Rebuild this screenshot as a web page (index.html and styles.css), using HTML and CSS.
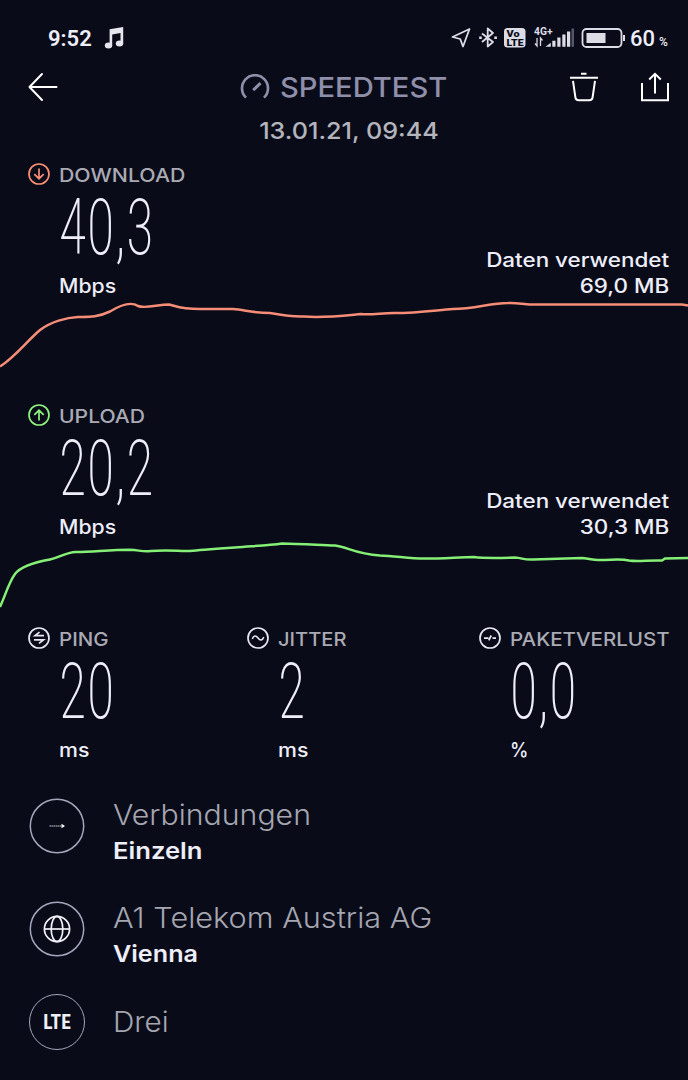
FILE: index.html
```
<!DOCTYPE html>
<html lang="de">
<head>
    <meta charset="UTF-8">
    <meta name="viewport" content="width=device-width, initial-scale=1.0">
    <title>Speedtest</title>
    <link rel="stylesheet" href="styles.css">
</head>
<body>
    <div class="status-bar">
        <span class="clock">9:52</span>
        <svg class="note" width="20" height="24" viewBox="0 0 20 24" fill="#e6e6ee">
            <path d="M5.600 3.200 19.200 1v16.500h-2.700V7L8.200 8.400v11.100H5.600z"/>
            <ellipse cx="4.500" cy="19.600" rx="3.700" ry="3"/>
            <ellipse cx="15.500" cy="17.400" rx="3.700" ry="3"/>
        </svg>
        <svg class="status-icons" width="174" height="26" viewBox="0 0 174 26" fill="none" stroke="#dcdce4" stroke-width="1.800">
            <path d="M18.500 4 1.500 12l7.700 2 2.800 7.500z" stroke-linejoin="round"/>
            <path d="M31 8.500 42 17l-5.300 4.500V3.500L42 8 31 17" stroke-linejoin="round"/>
            <path d="M28.200 12.800h2.600M43.300 12.800h2.600" stroke-width="2.600"/>
            <rect x="53" y="3" width="21.500" height="19.500" rx="3.500" fill="#dcdce4" stroke="none"/>
            <text class="volte" x="55.500" y="11.500" textLength="13" lengthAdjust="spacingAndGlyphs">Vo</text>
            <text class="volte" x="55.500" y="20.500" textLength="17" lengthAdjust="spacingAndGlyphs">LTE</text>
            <text class="net" x="83" y="9.500" textLength="18.500" lengthAdjust="spacingAndGlyphs">4G+</text>
            <path d="M86 13v8l-2-2.500M89.500 21v-8l2 2.500" stroke-width="1.300"/>
            <path d="M94.500 21.800h5.300v-4.100zM101.300 15.700h3.200v6.100h-3.200zM106.300 12.500h3.200v9.300h-3.200zM111.300 9.500h3.200v12.300h-3.200zM116 6.500h3.200v15.300H116z" fill="#dcdce4" stroke="none"/>
            <path d="M120.500 3.500h2.500v18.300h-2.500z" fill="#55566a" stroke="none"/>
            <rect x="131.500" y="4" width="39" height="18" rx="4"/>
            <path d="M135.500 8h19v10h-19z" fill="#dcdce4" stroke="none"/>
            <path d="M173 10v6" stroke-width="2"/>
        </svg>
        <span class="battery">60</span><span class="battery-unit">%</span>
    </div>

    <header class="top-bar">
        <svg class="back" width="32" height="32" viewBox="0 0 32 32" fill="none" stroke="#fff" stroke-width="2" stroke-linecap="round" stroke-linejoin="round">
            <path d="M15 3 2.500 16 15 29M2.500 16h27"/>
        </svg>
        <div class="brand">
            <svg width="30" height="26" viewBox="0 0 30 26" fill="none" stroke="#8f8faa" stroke-width="2.700">
                <path d="M6 23.600A13 13 0 1 1 24 23.600"/>
                <path d="m13.200 16.200 7.300-7" stroke-width="3"/>
            </svg>
            <span class="brand-name">SPEEDTEST</span>
        </div>
        <svg class="trash" width="30" height="32" viewBox="0 0 30 32" fill="none" stroke="#fff" stroke-width="2">
            <path d="M1 6.800h28M12 2.800h5.500M4 9.800l2.400 16.500q.4 2.900 3.200 2.900h10.800q2.800 0 3.200-2.900L26 9.800"/>
        </svg>
        <svg class="share" width="30" height="32" viewBox="0 0 30 32" fill="none" stroke="#fff" stroke-width="2">
            <path d="M2 12v17.200h26V12M15 22.500V3M9.200 8.500 15 2.800l5.800 5.700"/>
        </svg>
    </header>
    <div class="date"><span>13.01.21, 09:44</span></div>

    <section class="result">
        <div class="label">
            <svg width="22" height="22" viewBox="0 0 22 22" fill="none" stroke="#f98f75" stroke-width="1.700">
                <circle cx="11" cy="11" r="10"/>
                <path d="M11 5.500v10M6.300 11.200l4.700 4.500 4.700-4.500"/>
            </svg>
            <span class="name download">DOWNLOAD</span>
        </div>
        <div class="value"><span>40,3</span></div>
        <div class="details">
            <span class="unit">Mbps</span>
            <div class="used">Daten verwendet<br>69,0 MB</div>
        </div>
        <svg class="chart" width="688" height="72" viewBox="0 298 688 72" fill="none" stroke="#f58d77" stroke-width="2.500">
            <path d="M0 366.500C15 357 27 341 40 330C51 322 66 317.500 78 317C90 317 97 317.500 110 311.500C119 306 130 300.500 138 306C145 309 158 304.500 169 304.500C176 306 180 309 200 309L233 309C245 310 254 313 270 313C281 315 290 317 304 316.500C324 318 340 316 361 314C372 315 381 313 394 313C420 313 437 310 453 309C475 309 490 303 508 303C520 302.500 524 305 540 304.500L682 304.500L688 305.500"/>
        </svg>
    </section>

    <section class="result">
        <div class="label">
            <svg width="22" height="22" viewBox="0 0 22 22" fill="none" stroke="#8ff27e" stroke-width="1.700">
                <circle cx="11" cy="11" r="10"/>
                <path d="M11 16.500v-10M6.300 10.800 11 6.300l4.700 4.500"/>
            </svg>
            <span class="name upload">UPLOAD</span>
        </div>
        <div class="value"><span>20,2</span></div>
        <div class="details">
            <span class="unit">Mbps</span>
            <div class="used">Daten verwendet<br>30,3 MB</div>
        </div>
        <svg class="chart" width="688" height="72" viewBox="0 539 688 72" fill="none" stroke="#85ef76" stroke-width="2.500">
            <path d="M0 607C5 596 9 582 15 574C21 566 36 562 50 559.500C60 557.500 65 552.500 76 552C95 551.500 111 550 130 549.800C139 550 142 552 151 551C165 549.500 178 551 190 551C204 550 211 549 235 547.500C253 546 268 545.500 282 543.500C302 544 320 545 335 545.500C348 547 355 554 380 555.500C395 556 410 558.500 424 558.500C445 558.500 460 557 474 557C485 558.500 500 558 515 557.500C523 558 523 560 533 559.500L582 558C592 559 593 560.500 600 560C613 560 620 558.500 629 560.500C638 562 648 560 662 560.500L665 558.500L688 558"/>
        </svg>
    </section>

    <section class="metrics">
        <div class="metric">
            <div class="label">
                <svg width="22" height="22" viewBox="0 0 22 22" fill="none" stroke="#e8e8f2" stroke-width="1.700">
                    <circle cx="11" cy="11" r="10"/>
                    <path d="M16 8.700H7l4.500-3.500M6 12.800h9.500l-4.500 3.500"/>
                </svg>
                <span class="name ping">PING</span>
            </div>
            <div class="value"><span>20</span></div>
            <div class="unit ms">ms</div>
        </div>
        <div class="metric">
            <div class="label">
                <svg width="22" height="22" viewBox="0 0 22 22" fill="none" stroke="#e8e8f2" stroke-width="1.700">
                    <circle cx="11" cy="11" r="10"/>
                    <path d="M5.300 12C6.500 8 9 8.200 11 11s4.500 3 5.700-1" stroke-width="1.500"/>
                </svg>
                <span class="name jitter">JITTER</span>
            </div>
            <div class="value"><span>2</span></div>
            <div class="unit ms">ms</div>
        </div>
        <div class="metric">
            <div class="label">
                <svg width="22" height="22" viewBox="0 0 22 22" fill="none" stroke="#e8e8f2" stroke-width="1.700">
                    <circle cx="11" cy="11" r="10"/>
                    <path d="M5 11.200h4.500M9.800 13.300l2.400-4.800M13.500 11.200H17"/>
                </svg>
                <span class="name loss">PAKETVERLUST</span>
            </div>
            <div class="value"><span>0,0</span></div>
            <div class="unit percent">%</div>
        </div>
    </section>

    <section class="info">
        <div class="info-row">
            <svg width="56" height="56" viewBox="0 0 56 56" fill="none" stroke="#a5a6bb" stroke-width="1.500">
                <circle cx="28" cy="28" r="26.700"/>
                <path d="M20.500 28h12" stroke-dasharray="1.500 .5" stroke="#d0d0dc" stroke-width="1.200"/>
                <path d="m32.500 25.800 3.500 2.200-3.500 2.200z" fill="#fff" stroke="none"/>
            </svg>
            <div class="text">
                <div class="title">Verbindungen</div>
                <div class="subtitle">Einzeln</div>
            </div>
        </div>
        <div class="info-row server">
            <svg width="56" height="56" viewBox="0 0 56 56" fill="none" stroke="#a5a6bb" stroke-width="1.500">
                <circle cx="28" cy="28" r="26.700"/>
                <g stroke="#f0f0f6" stroke-width="1.700">
                    <circle cx="28" cy="28" r="12.600"/>
                    <ellipse cx="28" cy="28" rx="5.800" ry="12.600"/>
                    <path d="M15.400 28h25.200"/>
                </g>
            </svg>
            <div class="text">
                <div class="title">A1 Telekom Austria AG</div>
                <div class="subtitle city">Vienna</div>
            </div>
        </div>
        <div class="info-row provider">
            <div class="badge">LTE</div>
            <div class="title">Drei</div>
        </div>
    </section>
</body>
</html>
```
FILE: styles.css
```
body {
    margin: 0;
    width: 688px;
    height: 1080px;
    overflow: hidden;
    background-color: #090b19;
    color: #eeeef8;
    font-family: Inter, sans-serif;
}

svg {
    display: block;
    flex: none;
}

.status-bar {
    display: flex;
    align-items: center;
    height: 60px;
    padding: 16px 0 0 48px;
    box-sizing: border-box;
    font-family: Roboto, sans-serif;
}

.clock {
    flex: none;
    width: 56px;
    font-size: 22px;
    font-weight: 600;
}

.status-icons {
    margin-left: 327px;
}

.volte {
    font: 900 9px Roboto, sans-serif;
    fill: #090b19;
    stroke: none;
}

.net {
    font: 700 10px Roboto, sans-serif;
    fill: #dcdce4;
    stroke: none;
}

.battery {
    margin-left: 5px;
    font-size: 22px;
    font-weight: 500;
}

.battery-unit {
    margin: 8px 0 0 4px;
    font-size: 12px;
    font-weight: 500;
}

.top-bar {
    display: flex;
    align-items: center;
    height: 54px;
    padding: 0 18px 2px 27px;
}

.brand {
    display: flex;
    align-items: center;
    gap: 10px;
    width: 350px;
    margin-left: 181px;
    color: #8f8faa;
    font-size: 27.500px;
    font-weight: 500;
}

.brand-name {
    transform: scaleX(1.06);
    transform-origin: left;
}

.trash {
    margin-left: 3px;
}

.share {
    margin-left: 41px;
}

.date {
    height: 44px;
    line-height: 30px;
    text-align: center;
    color: #b4b4bc;
    font-size: 23.500px;
    font-weight: 500;
    padding-left: 9px;
}

.date span {
    display: inline-block;
    transform: scaleX(1.07);
}

.result {
    height: 241px;
}

.result + .result {
    height: 223px;
}

.label {
    display: flex;
    align-items: center;
    gap: 9px;
    height: 30px;
    padding-left: 28px;
}

.label svg {
    margin-bottom: 2px;
}

.name {
    color: #a9aab4;
    font-size: 19px;
    font-weight: 500;
    white-space: nowrap;
    transform: scaleX(1.08);
    transform-origin: left;
}

.download {
    transform: scaleX(1.12);
}

.upload {
    transform: scaleX(1.11);
}

.jitter {
    transform: scaleX(1.06);
}

/* tall condensed digits */
.value {
    height: 76px;
    padding-left: 59px;
    line-height: 76px;
    font-family: Roboto, sans-serif;
    font-size: 77px;
    font-weight: 200;
    font-stretch: 75%;
    letter-spacing: 1px;
}

.value span {
    display: inline-block;
    transform: scaleX(.73);
    transform-origin: left;
}

.details {
    display: flex;
    justify-content: space-between;
    align-items: flex-end;
    height: 33px;
    margin-bottom: -1px;
    padding: 0 19px 0 59px;
}

.unit,
.used {
    font-size: 19.500px;
    font-weight: 500;
    line-height: 26px;
}

.unit {
    transform: scaleX(1.09);
    transform-origin: left;
}

.used {
    text-align: right;
    transform: scaleX(1.15);
    transform-origin: right;
}

.metrics {
    display: grid;
    grid-template-columns: 219px 232px 1fr;
    height: 174px;
}

.metric .unit {
    width: 40px;
    margin: 7px 0 0 59px;
}

.metric .percent {
    transform: scaleX(.95);
}

.info-row {
    display: flex;
    gap: 28px;
    height: 103px;
    padding-left: 29px;
}

.server {
    height: 93px;
}

.text {
    margin-top: -1px;
}

.title {
    height: 36px;
    line-height: 36px;
    color: #a5a6b0;
    font-size: 28px;
    font-weight: 300;
    transform: scaleX(1.08);
    transform-origin: left;
}

.server .title {
    transform: scaleX(1.095);
}

.subtitle {
    line-height: 36px;
    font-size: 23.500px;
    font-weight: 600;
    transform: scaleX(1.09);
    transform-origin: left;
}

.city {
    transform: scaleX(1.07);
}

.provider .title {
    height: 57px;
    line-height: 57px;
    transform: scaleX(1.06);
}

.badge {
    width: 56px;
    height: 56px;
    box-sizing: border-box;
    border: 1.500px solid #a5a6bb;
    border-radius: 50%;
    line-height: 55px;
    text-align: center;
    font-family: Roboto, sans-serif;
    font-size: 19.500px;
    font-weight: 700;
    font-stretch: 83%;
}
```
